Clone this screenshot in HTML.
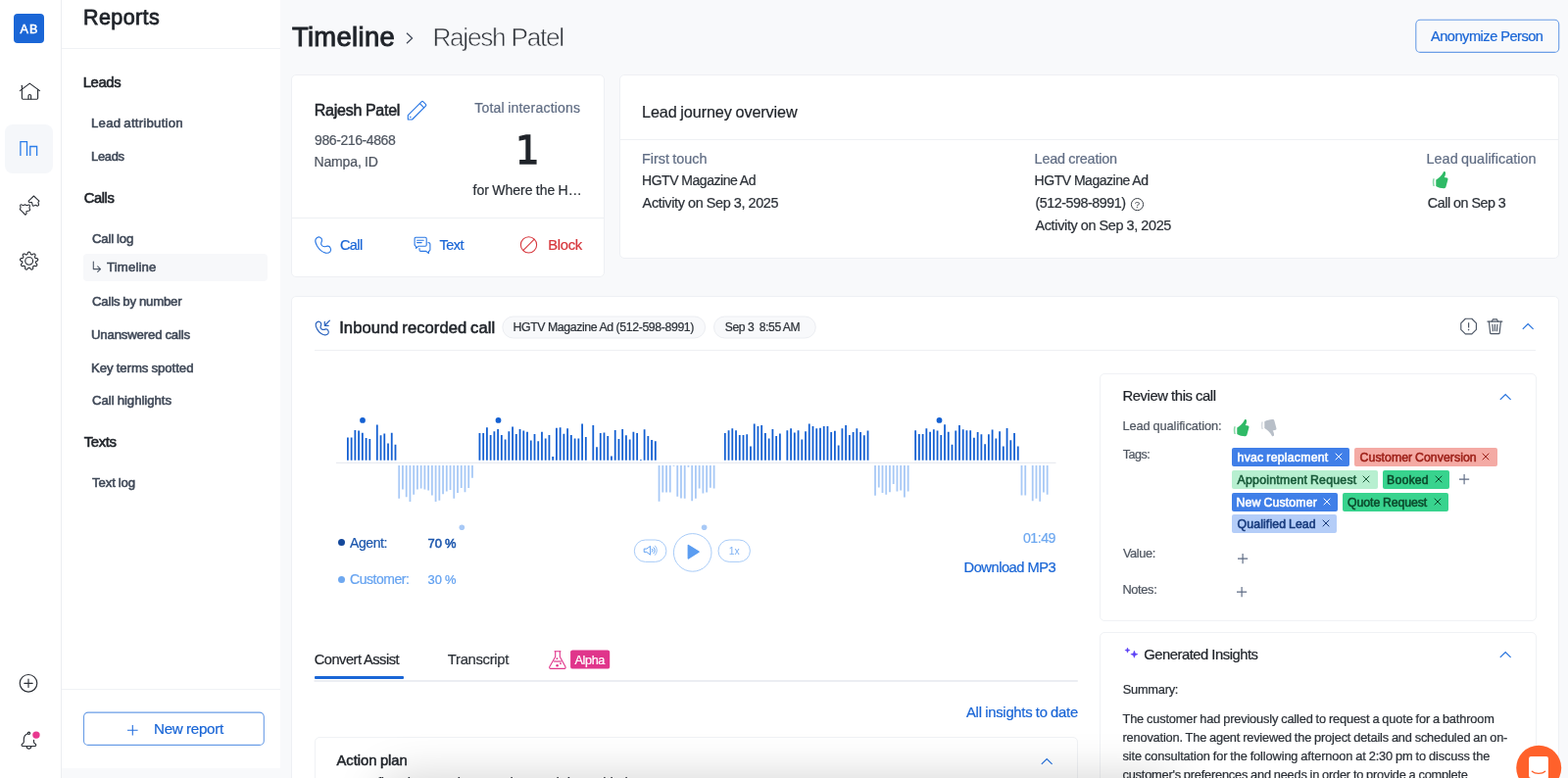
<!DOCTYPE html>
<html lang="en">
<head>
<meta charset="utf-8">
<title>Timeline - Rajesh Patel</title>
<style>
html,body{margin:0;padding:0}
body{width:1600px;height:794px;overflow:hidden;position:relative;background:#f8f9fb;font-family:"Liberation Sans",sans-serif;color:#1f2329}
div,span,a,h1,h2,h3,p,button,nav,aside,main,section,header,svg{position:absolute;box-sizing:border-box;margin:0;padding:0}
.g{left:0;top:0;width:0;height:0}
.t{line-height:1;white-space:pre;font-weight:400}
.card{background:#fff;border-radius:5px;border:1px solid #eef0f4}
.pill{border-radius:12px;background:#f7f8fa;border:1px solid #eef0f4}
.tag{border-radius:2px}
svg{overflow:visible}
</style>
</head>
<body>
<div id="app" style="left:0;top:0;width:1600px;height:794px;will-change:transform">
<div class="g rail" aria-label="Primary navigation">
<nav style="left:0;top:0;width:63px;height:794px;background:#fff;border-right:1px solid #eceef1">
</nav>
<div style="left:14px;top:14px;width:31px;height:30px;background:#1a66d6;border-radius:4px"></div>
<span class="t" style="left:20.55px;top:24px;font-size:12.6px;-webkit-text-stroke:0.5px currentColor;color:#fff;letter-spacing:1.1px;">AB</span>
<div style="left:5px;top:127px;width:49px;height:50px;background:#f5f7fa;border-radius:8px"></div>
<svg style="left:18px;top:82px" width="26" height="22" viewBox="18 82 26 22" fill="none"><g stroke="#2b2f36" stroke-width="1.15" stroke-linecap="round" stroke-linejoin="round"><path d="M20.4 92.6L30.3 85.1L40.5 92.6"/><path d="M22.4 87.2V91"/><path d="M22.4 91.4V100.1a1.1 1.1 0 0 0 1.1 1.1H37.5a1.1 1.1 0 0 0 1.1-1.1V91.4"/><path d="M29 101V97.8a1.3 1.3 0 0 1 2.6 0V101"/></g></svg>
<svg style="left:18px;top:141px" width="24" height="20" viewBox="18 141 24 20" fill="none"><g stroke="#2b7de9" stroke-width="1.3" stroke-linejoin="miter"><path d="M20.9 159V144.6H27.5V159"/><path d="M30.8 159V149.5H37.6V159"/></g></svg>
<svg style="left:18px;top:197px" width="26" height="24" viewBox="18 197 26 24" fill="none"><g stroke="#2b2f36" stroke-width="1.1" stroke-linejoin="round"><path d="M31.79 202.55L34.43 200L37.19 202.55L39.95 205.1L39.33 205.85Q38.7 206.6 38.95 207.1Q39.2 207.6 39.5 208.45Q39.8 209.3 39 209.85Q38.2 210.4 37.45 209.75Q36.7 209.1 36.2 209.25Q35.7 209.4 34.95 209.9Q34.2 210.4 33.65 210Q33.1 209.6 33 208.5Q32.9 207.4 32.55 206.75Q32.2 206.1 31.43 206.5Q30.65 206.9 30.02 206.5Q29.4 206.1 29.27 205.6L29.14 205.1L31.79 202.55Z"/><path d="M20.8 210.55Q20.3 209.4 21.05 208.9Q21.8 208.4 22.58 209.15Q23.35 209.9 24.48 209.25Q25.6 208.6 26.5 209.25Q27.4 209.9 28.65 209.25Q29.9 208.6 30.27 209.38Q30.65 210.15 30.15 211.18Q29.65 212.2 30.27 213.05Q30.9 213.9 30.52 214.55Q30.15 215.2 28.88 215.2Q27.6 215.2 27.1 215.7Q26.6 216.2 27 217.08Q27.4 217.96 26.63 218.61L25.87 219.25L23.09 216.47L20.3 213.7L20.8 212.7Q21.3 211.7 20.8 210.55Z"/></g></svg>
<svg style="left:18px;top:255px" width="24" height="24" viewBox="18 255 24 24" fill="none"><g stroke="#2b2f36" stroke-width="1.15" stroke-linejoin="round"><path d="M29.65 257.15L29.92 257.18L30.18 257.26L30.43 257.4L30.67 257.6L30.89 257.88L31.05 258.42L31.17 258.97L31.33 259.26L31.49 259.48L31.66 259.65L31.83 259.78L32.01 259.87L32.21 259.92L32.42 259.93L32.66 259.9L32.92 259.83L33.23 259.71L33.67 259.38L34.14 259.06L34.49 258.99L34.8 258.99L35.09 259.05L35.34 259.15L35.56 259.3L35.75 259.5L35.9 259.73L36 260L36.06 260.31L36.05 260.66L35.82 261.18L35.56 261.67L35.5 262L35.48 262.27L35.49 262.51L35.54 262.72L35.63 262.9L35.74 263.06L35.9 263.21L36.1 263.34L36.34 263.46L36.66 263.57L37.21 263.6L37.78 263.66L38.09 263.82L38.33 264.02L38.51 264.25L38.64 264.49L38.71 264.75L38.73 265.02L38.69 265.29L38.6 265.57L38.44 265.84L38.21 266.1L37.7 266.35L37.19 266.57L36.93 266.77L36.74 266.97L36.6 267.16L36.5 267.35L36.45 267.55L36.43 267.75L36.46 267.96L36.52 268.19L36.63 268.44L36.81 268.72L37.21 269.1L37.61 269.51L37.74 269.84L37.79 270.15L37.79 270.44L37.73 270.71L37.62 270.95L37.46 271.17L37.26 271.35L37.01 271.5L36.72 271.61L36.37 271.66L35.82 271.52L35.28 271.36L34.95 271.35L34.68 271.38L34.45 271.44L34.25 271.52L34.09 271.64L33.94 271.78L33.83 271.96L33.73 272.18L33.66 272.44L33.61 272.77L33.68 273.32L33.71 273.89L33.6 274.22L33.45 274.49L33.26 274.71L33.04 274.88L32.8 275L32.54 275.06L32.26 275.07L31.98 275.03L31.68 274.92L31.38 274.73L31.05 274.28L30.74 273.81L30.5 273.59L30.27 273.44L30.06 273.33L29.85 273.27L29.65 273.25L29.45 273.27L29.24 273.33L29.03 273.44L28.8 273.59L28.56 273.81L28.25 274.28L27.92 274.73L27.62 274.92L27.32 275.03L27.04 275.07L26.76 275.06L26.5 275L26.26 274.88L26.04 274.71L25.85 274.49L25.7 274.22L25.59 273.89L25.63 273.32L25.69 272.77L25.64 272.44L25.57 272.18L25.47 271.96L25.36 271.78L25.21 271.64L25.05 271.52L24.85 271.44L24.62 271.38L24.35 271.35L24.02 271.36L23.48 271.52L22.93 271.66L22.58 271.61L22.29 271.5L22.04 271.35L21.84 271.17L21.68 270.95L21.57 270.71L21.51 270.44L21.51 270.15L21.56 269.84L21.69 269.51L22.09 269.1L22.49 268.72L22.67 268.44L22.78 268.19L22.84 267.96L22.87 267.75L22.85 267.55L22.8 267.35L22.7 267.16L22.56 266.97L22.37 266.77L22.11 266.57L21.6 266.35L21.09 266.1L20.86 265.84L20.7 265.57L20.61 265.29L20.57 265.02L20.59 264.75L20.66 264.49L20.79 264.25L20.97 264.02L21.21 263.82L21.52 263.66L22.09 263.6L22.64 263.57L22.96 263.46L23.2 263.34L23.4 263.21L23.56 263.06L23.67 262.9L23.76 262.72L23.81 262.51L23.82 262.27L23.8 262L23.74 261.67L23.48 261.18L23.25 260.66L23.24 260.31L23.3 260L23.4 259.73L23.55 259.5L23.74 259.3L23.96 259.15L24.21 259.05L24.5 258.99L24.81 258.99L25.16 259.06L25.63 259.38L26.07 259.71L26.38 259.83L26.64 259.9L26.88 259.93L27.09 259.92L27.29 259.87L27.47 259.78L27.64 259.65L27.81 259.48L27.97 259.26L28.13 258.97L28.25 258.42L28.41 257.88L28.63 257.6L28.87 257.4L29.12 257.26L29.38 257.18L29.65 257.15Z"/><circle cx="29.65" cy="266.35" r="3.9"/></g></svg>
<svg style="left:18px;top:686px" width="22" height="22" viewBox="18 686 22 22" fill="none"><g stroke="#2b2f36" stroke-width="1.15" stroke-linecap="round"><circle cx="29" cy="697.3" r="8.8"/><path d="M24.8 697.3H33.2M29 693.1V701.5"/></g></svg>
<svg style="left:19px;top:744px" width="26" height="24" viewBox="19 744 26 24" fill="none"><g stroke="#2b2f36" stroke-width="1.15" stroke-linecap="round" stroke-linejoin="round"><path d="M28.3 748.7C25.5 749.6 24.3 752 24.3 754.6V757.2C24.3 758.2 23.6 758.7 22.7 759.3C21.8 759.9 21.9 761.5 23.2 761.5H35.6C36.9 761.5 37 759.9 36.1 759.3C35.2 758.7 34.5 758.2 34.5 757.2V755.2"/><circle cx="29.5" cy="748.3" r="1.15"/><path d="M27.2 761.8C27.4 764.9 31.6 764.9 31.8 761.8"/></g><circle cx="36.95" cy="750.1" r="4.6" fill="#fff"/><circle cx="36.95" cy="750.1" r="3.7" fill="#e8388f"/></svg>
</div>
<div class="g sidebar" aria-label="Reports navigation">
<aside style="left:63px;top:0;width:223px;height:784px;background:#fff"></aside>
<div style="left:63px;top:49px;width:223px;height:1px;background:#f0f2f5"></div>
<span class="t" style="left:85px;top:7.59375px;font-size:21.5px;-webkit-text-stroke:0.8px currentColor;color:#1f2329;letter-spacing:0.41px;">Reports</span>
<h3 class="t" style="left:84.7px;top:77px;font-size:14.8px;-webkit-text-stroke:0.6px currentColor;color:#1f2329;letter-spacing:-0.35px;">Leads</h3>
<h3 class="t" style="left:85.7px;top:194.703125px;font-size:14.7px;-webkit-text-stroke:0.6px currentColor;color:#1f2329;letter-spacing:-0.38px;">Calls</h3>
<h3 class="t" style="left:85.7px;top:443.703125px;font-size:14.9px;-webkit-text-stroke:0.6px currentColor;color:#1f2329;letter-spacing:-0.35px;">Texts</h3>
<div style="left:85px;top:259px;width:188px;height:28px;background:#f7f8fa;border-radius:4px"></div>
<a class="t" style="left:93px;top:119.296875px;font-size:13.2px;-webkit-text-stroke:0.55px currentColor;color:#3f4857;letter-spacing:0.24px;word-spacing:-0.85px;">Lead attribution</a>
<a class="t" style="left:93px;top:154px;font-size:12.9px;-webkit-text-stroke:0.55px currentColor;color:#3f4857;letter-spacing:-0.27px;">Leads</a>
<a class="t" style="left:94px;top:237px;font-size:13.2px;-webkit-text-stroke:0.55px currentColor;color:#3f4857;letter-spacing:-0.19px;word-spacing:-0.42px;">Call log</a>
<a class="t" style="left:94px;top:300.90625px;font-size:13.2px;-webkit-text-stroke:0.55px currentColor;color:#3f4857;letter-spacing:-0.21px;word-spacing:-0.4px;">Calls by number</a>
<a class="t" style="left:93px;top:334.59375px;font-size:13.2px;-webkit-text-stroke:0.55px currentColor;color:#3f4857;letter-spacing:-0.17px;word-spacing:-0.44px;">Unanswered calls</a>
<a class="t" style="left:93px;top:368.5px;font-size:13.2px;-webkit-text-stroke:0.55px currentColor;color:#3f4857;letter-spacing:-0.04px;word-spacing:-0.57px;">Key terms spotted</a>
<a class="t" style="left:94px;top:402.09375px;font-size:13.2px;-webkit-text-stroke:0.55px currentColor;color:#3f4857;letter-spacing:-0.03px;word-spacing:-0.58px;">Call highlights</a>
<a class="t" style="left:94px;top:485.5px;font-size:13.2px;-webkit-text-stroke:0.55px currentColor;color:#3f4857;letter-spacing:-0.12px;word-spacing:-0.49px;">Text log</a>
<svg style="left:93px;top:265px" width="12" height="14" viewBox="93 265 12 14" fill="none"><g stroke="#4d5766" stroke-width="1.1" stroke-linecap="round" stroke-linejoin="round"><path d="M95.3 267V274.6H102.2"/><path d="M99.7 271.9L102.5 274.6L99.7 277.3"/></g></svg>
<a class="t" style="left:109.1px;top:266.40625px;font-size:13.2px;-webkit-text-stroke:0.55px currentColor;color:#3f4857;letter-spacing:0.14px;">Timeline</a>
<div style="left:63px;top:703px;width:223px;height:1px;background:#f0f2f5"></div>
<svg style="left:84px;top:726px" width="187" height="37" viewBox="84 726 187 37" fill="none"><rect x="85.5" y="727.1" width="183.8" height="33.3" rx="4.5" fill="#fff" stroke="#6a9de6" stroke-width="1.1"/></svg>
<svg style="left:129.3px;top:738.8px" width="12.6" height="12.6" viewBox="129.3 738.8 12.6 12.6" fill="none"><path d="M130.3 745.1H140.9M135.6 739.8V750.4" stroke="#2670de" stroke-width="1.1"/></svg>
<span class="t" style="left:157px;top:736px;font-size:15.2px;-webkit-text-stroke:0.22px currentColor;color:#1a66d6;letter-spacing:-0.29px;word-spacing:-0.4px;">New report</span>
</div>
<header class="g page-header" aria-label="Page header">
<h1 class="t" style="left:297.9px;top:23.59375px;font-size:27.4px;-webkit-text-stroke:0.93px currentColor;color:#1f2329;letter-spacing:0.34px;">Timeline</h1>
<svg style="left:414px;top:33px" width="8" height="12" viewBox="0 0 8 12"><path d="M1 0.8 L6.6 6 L1 11.2" fill="none" stroke="#3f4857" stroke-width="1.2"/></svg>
<h2 class="t" style="left:441.4px;top:24.59375px;font-size:26.2px;color:#33373d;letter-spacing:-1.25px;word-spacing:0.04px;-webkit-text-stroke:0.6px #f8f9fb;">Rajesh Patel</h2>
<svg style="left:1443px;top:19px" width="149" height="37" viewBox="1443 19 149 37" fill="none"><rect x="1444.8" y="20.3" width="145.9" height="33.1" rx="4.5" fill="none" stroke="#6a9de6" stroke-width="1.1"/></svg>
<span class="t" style="left:1460px;top:29.90625px;font-size:14.6px;-webkit-text-stroke:0.22px currentColor;color:#1a66d6;letter-spacing:-0.49px;word-spacing:-0.18px;">Anonymize Person</span>
</header>
<section class="g person-card" aria-label="Contact">
<div class="card" style="left:297px;top:76px;width:320px;height:207px;"></div>
<div style="left:298px;top:222px;width:318px;height:1px;background:#eef0f3"></div>
<span class="t" style="left:320.8px;top:104.59375px;font-size:16px;-webkit-text-stroke:0.54px currentColor;color:#1f2329;letter-spacing:-0.24px;word-spacing:-0.49px;">Rajesh Patel</span>
<svg style="left:414px;top:101px" width="24" height="24" viewBox="414 101 24 24" fill="none"><g stroke="#2b78e4" stroke-width="1.15" stroke-linejoin="round" stroke-linecap="round"><path d="M416.3 117.6L430.1 103.8a1.3 1.3 0 0 1 1.8 0l2.5 2.5a1.3 1.3 0 0 1 0 1.8L420.6 122H416.3Z"/><path d="M428.4 105.6L432.6 109.8"/></g><circle cx="418.8" cy="119.4" r=".75" fill="#2b78e4"/></svg>
<span class="t" style="left:321px;top:135.5px;font-size:14px;-webkit-text-stroke:0.22px currentColor;color:#4f5661;letter-spacing:-0.4px;">986-216-4868</span>
<span class="t" style="left:320.4px;top:158.40625px;font-size:14px;-webkit-text-stroke:0.22px currentColor;color:#4f5661;letter-spacing:-0.11px;word-spacing:-0.54px;">Nampa, ID</span>
<span class="t" style="left:484.3px;top:103px;font-size:14px;-webkit-text-stroke:0.22px currentColor;color:#606d84;letter-spacing:0.21px;word-spacing:-0.85px;">Total interactions</span>
<span class="t" style="left:524.8px;top:135px;width:27px;text-align:center;font-size:38.5px;font-family:&quot;DejaVu Sans&quot;,&quot;Liberation Sans&quot;,sans-serif;color:#1f2329;-webkit-text-stroke:1.3px #1f2329">1</span>
<span class="t" style="left:482.5px;top:187px;font-size:14px;-webkit-text-stroke:0.22px currentColor;color:#2c3138;letter-spacing:0.03px;word-spacing:-0.67px;">for Where the H…</span>
<svg style="left:318px;top:239px" width="24" height="24" viewBox="318 239 24 24" fill="none"><g transform="translate(329.6 250) scale(.93) translate(-329.5 -249.9)"><path d="M323 241.9Q324.6 240.6 326.4 241.6Q328.8 243 328.3 245.4L327.5 247.6Q327 249.6 328.6 250.8Q330.6 252.2 332.6 251.6L334.4 251.1Q336.6 250.9 337.6 253.2Q338.8 255.6 337.4 257.2Q335.4 259.4 332.2 258.6Q326.6 257.2 323 251Q320.6 246.6 321.2 244.4Q321.6 243 323 241.9Z" stroke="#2b78e4" stroke-width="1.2" stroke-linejoin="round"/></g></svg>
<span class="t" style="left:346.9px;top:243px;font-size:14.5px;-webkit-text-stroke:0.22px currentColor;color:#1a66d6;letter-spacing:-0.59px;">Call</span>
<svg style="left:421px;top:240px" width="22" height="22" viewBox="421 240 22 22" fill="none"><g stroke="#2b78e4" stroke-width="1.1" stroke-linejoin="round" stroke-linecap="round"><path d="M424.2 242.3H434a1.2 1.2 0 0 1 1.2 1.2V250a1.2 1.2 0 0 1-1.2 1.2H427.2L424.6 253.4V251.2a1.4 1.4 0 0 1-1.5-1.3V243.5a1.2 1.2 0 0 1 1.1-1.2Z"/><path d="M425.6 245.2H432.2M425.6 247.6H430.2"/><path d="M437 247.6a1.7 1.7 0 0 1 1.9 1.6V254.8a1.5 1.5 0 0 1-1.5 1.5V258.6L434.8 256.4H429.4a1.4 1.4 0 0 1-1.4-1.4V253.6"/></g></svg>
<span class="t" style="left:448.5px;top:243px;font-size:14.5px;-webkit-text-stroke:0.22px currentColor;color:#1a66d6;letter-spacing:-0.55px;">Text</span>
<svg style="left:529px;top:239px" width="22" height="22" viewBox="529 239 22 22" fill="none"><g stroke="#d7393f" stroke-width="1.1"><circle cx="539.5" cy="249.9" r="8.1"/><path d="M533.8 255.6L545.2 244.2"/></g></svg>
<span class="t" style="left:559.3px;top:243px;font-size:14.8px;-webkit-text-stroke:0.22px currentColor;color:#d6363c;letter-spacing:-0.35px;">Block</span>
</section>
<section class="g journey-card" aria-label="Lead journey overview">
<div class="card" style="left:632px;top:76px;width:959px;height:188px;"></div>
<div style="left:633px;top:142px;width:957px;height:1px;background:#eef0f3"></div>
<span class="t" style="left:655px;top:106px;font-size:16.2px;-webkit-text-stroke:0.22px currentColor;color:#1f2329;letter-spacing:-0.1px;word-spacing:-0.65px;">Lead journey overview</span>
<span class="t" style="left:655px;top:155px;font-size:14.4px;-webkit-text-stroke:0.22px currentColor;color:#606d84;word-spacing:-0.66px;">First touch</span>
<span class="t" style="left:655px;top:177.40625px;font-size:14px;-webkit-text-stroke:0.22px currentColor;color:#2c3138;letter-spacing:-0.46px;word-spacing:-0.19px;">HGTV Magazine Ad</span>
<span class="t" style="left:655.6px;top:200px;font-size:14.4px;-webkit-text-stroke:0.22px currentColor;color:#2c3138;letter-spacing:-0.31px;word-spacing:-0.35px;">Activity on Sep 3, 2025</span>
<span class="t" style="left:1055.6px;top:155px;font-size:14.4px;-webkit-text-stroke:0.22px currentColor;color:#606d84;letter-spacing:-0.19px;word-spacing:-0.48px;">Lead creation</span>
<span class="t" style="left:1055.6px;top:177.40625px;font-size:14px;-webkit-text-stroke:0.22px currentColor;color:#2c3138;letter-spacing:-0.46px;word-spacing:-0.19px;">HGTV Magazine Ad</span>
<span class="t" style="left:1056.4px;top:200px;font-size:14.3px;-webkit-text-stroke:0.22px currentColor;color:#2c3138;letter-spacing:-0.45px;">(512-598-8991)</span>
<svg style="left:1152px;top:200px" width="18" height="18" viewBox="1152 200 18 18" fill="none"><circle cx="1160.5" cy="208.6" r="6.1" stroke="#3a3f47" stroke-width="1"/><text x="1160.5" y="212.1" text-anchor="middle" font-family="Liberation Sans, sans-serif" font-size="9.6" fill="#3a3f47">?</text></svg>
<span class="t" style="left:1056.4px;top:223px;font-size:14.4px;-webkit-text-stroke:0.22px currentColor;color:#2c3138;letter-spacing:-0.31px;word-spacing:-0.35px;">Activity on Sep 3, 2025</span>
<span class="t" style="left:1455.5px;top:155px;font-size:14.4px;-webkit-text-stroke:0.22px currentColor;color:#606d84;letter-spacing:0.04px;word-spacing:-0.7px;">Lead qualification</span>
<svg style="left:1460.3px;top:172.5px" width="20" height="22" viewBox="1460.3 172.5 20 22" fill="none"><g transform="translate(203.3 -253.5)"><path fill="#2fba66" d="M1262.3 442.9V436.4C1264.6 435.3 1268.2 432.4 1270 428.4C1270.4 427.7 1271.9 428 1272 429.2C1272.2 431 1271.6 432.6 1270.7 433.9L1273.6 434.6C1274.5 434.9 1274.6 435.6 1274.4 436.4L1272.4 443.8C1272.1 444.8 1271.3 445.3 1270.3 445.2C1267.6 445 1264.6 444.4 1262.3 442.9Z"/><path fill="#2fba66" opacity=".55" d="M1259.2 435.3H1260.8C1260.3 437.8 1260.3 440.4 1260.9 442.9H1259.4C1258.7 440.4 1258.6 437.8 1259.2 435.3Z"/></g></svg>
<span class="t" style="left:1456.8px;top:200px;font-size:14.3px;-webkit-text-stroke:0.22px currentColor;color:#2c3138;letter-spacing:-0.43px;word-spacing:-0.22px;">Call on Sep 3</span>
</section>
<section class="g call-card" aria-label="Inbound recorded call">
<div class="card" style="left:297px;top:302px;width:1294px;height:500px;border-radius:5px 5px 0 0"></div>
<svg style="left:319px;top:324px" width="22" height="20" viewBox="319 324 22 20" fill="none"><g transform="translate(73.3 141.33) scale(0.775)"><path d="M323 241.9Q324.6 240.6 326.4 241.6Q328.8 243 328.3 245.4L327.5 247.6Q327 249.6 328.6 250.8Q330.6 252.2 332.6 251.6L334.4 251.1Q336.6 250.9 337.6 253.2Q338.8 255.6 337.4 257.2Q335.4 259.4 332.2 258.6Q326.6 257.2 323 251Q320.6 246.6 321.2 244.4Q321.6 243 323 241.9Z" stroke="#2a62bd" stroke-width="1.55" stroke-linejoin="round"/></g><g stroke="#2a62bd" stroke-width="1.2" stroke-linecap="round" stroke-linejoin="round"><path d="M336.4 327.2L331.6 332"/><path d="M331.3 328.4V332.3H335.2"/></g></svg>
<span class="t" style="left:346.2px;top:326.90625px;font-size:16.6px;-webkit-text-stroke:0.56px currentColor;color:#1f2329;letter-spacing:0.05px;word-spacing:-0.81px;">Inbound recorded call</span>
<svg style="left:511px;top:321px" width="211" height="26" viewBox="511 321 211 26" fill="none"><rect x="512.8" y="323" width="206.8" height="22" rx="11" fill="#f8f9fb" stroke="#eceef2" stroke-width="1"/></svg>
<span class="t" style="left:523.5px;top:328.40625px;font-size:12.3px;-webkit-text-stroke:0.22px currentColor;color:#2c3138;letter-spacing:-0.38px;word-spacing:-0.18px;">HGTV Magazine Ad (512-598-8991)</span>
<svg style="left:727px;top:321px" width="108" height="26" viewBox="727 321 108 26" fill="none"><rect x="728.5" y="323" width="103.8" height="22" rx="11" fill="#f8f9fb" stroke="#eceef2" stroke-width="1"/></svg>
<span class="t" style="left:739.8px;top:328.40625px;font-size:12.1px;-webkit-text-stroke:0.22px currentColor;color:#2c3138;letter-spacing:-0.41px;word-spacing:-0.15px;">Sep 3  8:55 AM</span>
<svg style="left:1488px;top:322px" width="22" height="22" viewBox="1488 322 22 22" fill="none"><path d="M1506.42 336.34L1501.84 340.92L1495.36 340.92L1490.78 336.34L1490.78 329.86L1495.36 325.28L1501.84 325.28L1506.42 329.86Z" stroke="#4d5766" stroke-width="1.15" stroke-linejoin="round"/><path d="M1498.6 329.2V334.4" stroke="#4d5766" stroke-width="1.2"/><circle cx="1498.6" cy="336.6" r=".8" fill="#4d5766"/></svg>
<svg style="left:1516px;top:323px" width="20" height="20" viewBox="1516 323 20 20" fill="none"><g stroke="#4d5766" stroke-width="1.15" stroke-linecap="round" stroke-linejoin="round"><path d="M1517.9 328.1H1532.9"/><path d="M1522.3 327.9L1523.3 325.9H1527.5L1528.5 327.9"/><path d="M1519.4 328.3L1520.6 339.6a1.1 1.1 0 0 0 1.1 1H1529.1a1.1 1.1 0 0 0 1.1-1L1531.4 328.3"/><path d="M1522.9 331.2L1523.4 337.6M1525.4 331.2V337.6M1527.9 331.2L1527.4 337.6"/></g></svg>
<svg style="left:1551.7px;top:327.8px" width="14" height="10" viewBox="1551.7 327.8 14 10" fill="none"><path d="M1553.5 335.6L1558.9 330.4L1564.3 335.6" stroke="#2370dd" stroke-width="1.15"/></svg>
<div style="left:321px;top:357px;width:1246px;height:1px;background:#eef0f3"></div>
<svg style="left:340px;top:420px" width="742" height="125" viewBox="340 420 742 125" role="img"><rect x="343" y="471.8" width="734.5" height="1" fill="#e4e7ed"/><path fill="#1460d2" d="M354 446.5h1.8V469.8h-1.8zM357.74 446.5h1.8V469.8h-1.8zM361.47 438.9h1.8V469.8h-1.8zM365.21 439.6h1.8V469.8h-1.8zM368.95 441.8h1.8V469.8h-1.8zM372.69 447.1h1.8V469.8h-1.8zM376.42 448.1h1.8V469.8h-1.8zM383.9 433.6h1.8V469.8h-1.8zM387.63 444.2h1.8V469.8h-1.8zM391.37 442.5h1.8V469.8h-1.8zM395.11 452.5h1.8V469.8h-1.8zM398.84 441.8h1.8V469.8h-1.8zM402.58 453.8h1.8V469.8h-1.8zM488.53 442.1h1.8V469.8h-1.8zM492.27 442.1h1.8V469.8h-1.8zM496.01 436.2h1.8V469.8h-1.8zM499.74 444h1.8V469.8h-1.8zM503.48 440.2h1.8V469.8h-1.8zM507.22 437.9h1.8V469.8h-1.8zM510.95 444h1.8V469.8h-1.8zM514.69 448.4h1.8V469.8h-1.8zM518.43 440.2h1.8V469.8h-1.8zM522.16 435.4h1.8V469.8h-1.8zM525.9 443.1h1.8V469.8h-1.8zM529.64 437.9h1.8V469.8h-1.8zM533.38 439.6h1.8V469.8h-1.8zM537.11 440.8h1.8V469.8h-1.8zM540.85 449.6h1.8V469.8h-1.8zM544.59 443.1h1.8V469.8h-1.8zM548.32 450.3h1.8V469.8h-1.8zM552.06 440.8h1.8V469.8h-1.8zM555.8 447.4h1.8V469.8h-1.8zM559.53 444h1.8V469.8h-1.8zM563.27 466h1.8V469.8h-1.8zM567.01 436.8h1.8V469.8h-1.8zM570.75 436.2h1.8V469.8h-1.8zM574.48 442.7h1.8V469.8h-1.8zM578.22 437.3h1.8V469.8h-1.8zM581.96 444h1.8V469.8h-1.8zM585.69 447.4h1.8V469.8h-1.8zM589.43 447.4h1.8V469.8h-1.8zM593.17 432.4h1.8V469.8h-1.8zM596.9 446.1h1.8V469.8h-1.8zM604.38 433.9h1.8V469.8h-1.8zM608.12 456.2h1.8V469.8h-1.8zM611.85 442.1h1.8V469.8h-1.8zM615.59 441.4h1.8V469.8h-1.8zM619.33 445h1.8V469.8h-1.8zM623.06 465.6h1.8V469.8h-1.8zM626.8 438.9h1.8V469.8h-1.8zM630.54 448h1.8V469.8h-1.8zM634.27 437.9h1.8V469.8h-1.8zM638.01 444.2h1.8V469.8h-1.8zM641.75 448.4h1.8V469.8h-1.8zM645.49 440.8h1.8V469.8h-1.8zM649.22 442.1h1.8V469.8h-1.8zM652.96 468.9h1.8V469.8h-1.8zM656.7 438.3h1.8V469.8h-1.8zM660.43 445h1.8V469.8h-1.8zM664.17 449h1.8V469.8h-1.8zM667.91 450.3h1.8V469.8h-1.8zM738.91 442.1h1.8V469.8h-1.8zM742.65 439.2h1.8V469.8h-1.8zM746.38 437.3h1.8V469.8h-1.8zM750.12 439.2h1.8V469.8h-1.8zM753.86 444h1.8V469.8h-1.8zM757.6 444h1.8V469.8h-1.8zM761.33 443.3h1.8V469.8h-1.8zM765.07 455.6h1.8V469.8h-1.8zM768.81 432.6h1.8V469.8h-1.8zM772.54 434.9h1.8V469.8h-1.8zM776.28 433.9h1.8V469.8h-1.8zM780.02 442.1h1.8V469.8h-1.8zM783.75 447.4h1.8V469.8h-1.8zM787.49 437.9h1.8V469.8h-1.8zM791.23 445h1.8V469.8h-1.8zM794.97 442.5h1.8V469.8h-1.8zM802.44 439.2h1.8V469.8h-1.8zM806.18 437.3h1.8V469.8h-1.8zM809.91 441.4h1.8V469.8h-1.8zM813.65 439.2h1.8V469.8h-1.8zM817.39 448.6h1.8V469.8h-1.8zM821.12 440.2h1.8V469.8h-1.8zM824.86 432.6h1.8V469.8h-1.8zM828.6 434.9h1.8V469.8h-1.8zM832.34 437.3h1.8V469.8h-1.8zM836.07 436.8h1.8V469.8h-1.8zM839.81 434.9h1.8V469.8h-1.8zM843.55 434.9h1.8V469.8h-1.8zM847.28 441.1h1.8V469.8h-1.8zM851.02 439.8h1.8V469.8h-1.8zM854.76 454.4h1.8V469.8h-1.8zM858.5 437.3h1.8V469.8h-1.8zM862.23 433.9h1.8V469.8h-1.8zM865.97 444h1.8V469.8h-1.8zM869.71 441.1h1.8V469.8h-1.8zM873.44 437.3h1.8V469.8h-1.8zM877.18 441.1h1.8V469.8h-1.8zM880.92 444.2h1.8V469.8h-1.8zM884.65 439.6h1.8V469.8h-1.8zM933.24 439.2h1.8V469.8h-1.8zM936.97 443.1h1.8V469.8h-1.8zM940.71 443.1h1.8V469.8h-1.8zM944.45 437.3h1.8V469.8h-1.8zM948.18 440.8h1.8V469.8h-1.8zM951.92 438.3h1.8V469.8h-1.8zM955.66 439.6h1.8V469.8h-1.8zM959.39 444h1.8V469.8h-1.8zM963.13 433.3h1.8V469.8h-1.8zM966.87 440.8h1.8V469.8h-1.8zM970.61 453.8h1.8V469.8h-1.8zM974.34 439.6h1.8V469.8h-1.8zM978.08 434.1h1.8V469.8h-1.8zM981.82 438.3h1.8V469.8h-1.8zM985.55 439.2h1.8V469.8h-1.8zM989.29 439.2h1.8V469.8h-1.8zM993.03 446.7h1.8V469.8h-1.8zM996.76 441.1h1.8V469.8h-1.8zM1000.5 443.3h1.8V469.8h-1.8zM1004.24 453.2h1.8V469.8h-1.8zM1007.98 443.3h1.8V469.8h-1.8zM1011.71 438.6h1.8V469.8h-1.8zM1015.45 447.4h1.8V469.8h-1.8zM1019.19 440.2h1.8V469.8h-1.8zM1022.92 455.6h1.8V469.8h-1.8zM1026.66 437h1.8V469.8h-1.8zM1030.4 449.3h1.8V469.8h-1.8zM1034.13 442.1h1.8V469.8h-1.8zM1037.87 455.6h1.8V469.8h-1.8z"/><path fill="#a8c9f6" d="M406.32 475h1.8V508.8h-1.8zM410.06 475h1.8V499.4h-1.8zM413.79 475h1.8V507.2h-1.8zM417.53 475h1.8V512h-1.8zM421.27 475h1.8V504.7h-1.8zM425 475h1.8V499.6h-1.8zM428.74 475h1.8V498.4h-1.8zM432.48 475h1.8V499.6h-1.8zM436.21 475h1.8V500.6h-1.8zM439.95 475h1.8V505.4h-1.8zM443.69 475h1.8V512h-1.8zM447.43 475h1.8V510.7h-1.8zM451.16 475h1.8V504.2h-1.8zM454.9 475h1.8V501.6h-1.8zM458.64 475h1.8V500h-1.8zM462.37 475h1.8V508.8h-1.8zM466.11 475h1.8V502.9h-1.8zM469.85 475h1.8V498.1h-1.8zM473.58 475h1.8V502.3h-1.8zM477.32 475h1.8V498.1h-1.8zM481.06 475h1.8V487.7h-1.8zM671.64 475h1.8V511.7h-1.8zM675.38 475h1.8V502.5h-1.8zM679.12 475h1.8V502.5h-1.8zM682.86 475h1.8V502.5h-1.8zM686.59 475h1.8V475.8h-1.8zM690.33 475h1.8V506.7h-1.8zM694.07 475h1.8V508.6h-1.8zM697.8 475h1.8V508.8h-1.8zM701.54 475h1.8V476.8h-1.8zM705.28 475h1.8V511.3h-1.8zM709.01 475h1.8V508.8h-1.8zM712.75 475h1.8V498.4h-1.8zM716.49 475h1.8V503.5h-1.8zM720.23 475h1.8V502.5h-1.8zM723.96 475h1.8V497.7h-1.8zM727.7 475h1.8V498.4h-1.8zM892.13 475h1.8V505.7h-1.8zM895.87 475h1.8V497.5h-1.8zM899.6 475h1.8V502.9h-1.8zM903.34 475h1.8V504.7h-1.8zM907.08 475h1.8V502.3h-1.8zM910.81 475h1.8V494.1h-1.8zM914.55 475h1.8V501.6h-1.8zM918.29 475h1.8V500.6h-1.8zM922.02 475h1.8V507.6h-1.8zM925.76 475h1.8V501.6h-1.8zM1041.61 475h1.8V505.4h-1.8zM1045.34 475h1.8V505.4h-1.8zM1052.82 475h1.8V511.3h-1.8zM1056.56 475h1.8V508.8h-1.8zM1060.29 475h1.8V511.7h-1.8zM1064.03 475h1.8V502.5h-1.8zM1067.77 475h1.8V504.7h-1.8z"/><circle cx="370" cy="428.9" r="2.9" fill="#1460d2"/><circle cx="508.5" cy="428.9" r="2.9" fill="#1460d2"/><circle cx="958.5" cy="428.9" r="2.9" fill="#1460d2"/><circle cx="471.3" cy="538.2" r="2.8" fill="#a8c9f6"/><circle cx="718.6" cy="538.2" r="2.8" fill="#a8c9f6"/></svg>
<div style="left:344.5px;top:549.5px;width:7px;height:7px;background:#14489b;border-radius:50%"></div>
<span class="t" style="left:357px;top:546.5px;font-size:14px;-webkit-text-stroke:0.22px currentColor;color:#1d57ad;letter-spacing:-0.42px;">Agent:</span>
<span class="t" style="left:436.5px;top:548.5px;font-size:12.9px;-webkit-text-stroke:0.55px currentColor;color:#1d57ad;letter-spacing:0.09px;word-spacing:-0.68px;">70 %</span>
<div style="left:344.5px;top:587.5px;width:7px;height:7px;background:#6ea8f0;border-radius:50%"></div>
<span class="t" style="left:357px;top:583.796875px;font-size:14px;-webkit-text-stroke:0.22px currentColor;color:#66a3f0;letter-spacing:-0.46px;">Customer:</span>
<span class="t" style="left:436.5px;top:585.796875px;font-size:12.9px;-webkit-text-stroke:0.22px currentColor;color:#5f9ff0;letter-spacing:0.09px;word-spacing:-0.68px;">30 %</span>
<svg style="left:645px;top:542px" width="124" height="44" viewBox="645 542 124 44" fill="none"><g stroke="#a9ccf8" stroke-width="1"><rect x="647.3" y="551" width="32.6" height="22.4" rx="11.2"/><circle cx="706.7" cy="563.9" r="19.3"/><rect x="733" y="551" width="32.4" height="22.4" rx="11.2"/></g><path d="M702.4 556.6L713 563.1L702.4 569.8Z" fill="#5b9df1" stroke="#5b9df1" stroke-width="1.6" stroke-linejoin="round"/><g stroke="#5b9df1" stroke-width=".95" stroke-linejoin="round" stroke-linecap="round"><path d="M657.6 560.1H659.8L663.6 557.4V566.2L659.8 563.4H657.6Z"/><path d="M665.5 560.3a2.1 2.1 0 0 1 0 2.9"/><path d="M667 558.7a4.3 4.3 0 0 1 0 6.1"/><path d="M668.5 557.1a6.6 6.6 0 0 1 0 9.3" opacity=".7"/></g><text x="749.3" y="565.8" text-anchor="middle" font-family="Liberation Sans, sans-serif" font-size="10.4" fill="#7fb2f4">1x</text></svg>
<span class="t" style="left:1044px;top:542.40625px;font-size:14.2px;-webkit-text-stroke:0.22px currentColor;color:#6ea8f0;letter-spacing:-0.53px;">01:49</span>
<span class="t" style="left:983.5px;top:572px;font-size:14.7px;-webkit-text-stroke:0.22px currentColor;color:#1a66d6;letter-spacing:-0.48px;word-spacing:-0.2px;">Download MP3</span>
<span class="t" style="left:320.8px;top:666px;font-size:14.6px;-webkit-text-stroke:0.22px currentColor;color:#1f2329;letter-spacing:-0.49px;word-spacing:-0.18px;">Convert Assist</span>
<div style="left:320.5px;top:690px;width:91px;height:3px;background:#1a66d6;border-radius:1px"></div>
<svg style="left:319px;top:693px" width="783" height="5" viewBox="319 693 783 5" fill="none"><rect x="320.5" y="694.1" width="779.3" height="1.75" rx="0" fill="#e9ecf1"/></svg>
<span class="t" style="left:456.8px;top:666px;font-size:14.8px;-webkit-text-stroke:0.22px currentColor;color:#2c3138;letter-spacing:-0.29px;">Transcript</span>
<svg style="left:559px;top:662px" width="22" height="24" viewBox="559 662 22 24" fill="none"><g stroke="#e0358b" stroke-width="1.1" stroke-linejoin="round" stroke-linecap="round"><path d="M566 664.7H572"/><path d="M566.7 664.9V670.2L560.8 680.6a1.2 1.2 0 0 0 1 1.8H576a1.2 1.2 0 0 0 1-1.8L571.3 670.2V664.9"/><path d="M565.4 675H572.4" stroke-width="1.3" opacity=".8"/></g><circle cx="568.4" cy="672.2" r=".9" fill="#e0358b"/><circle cx="568.6" cy="679.2" r="1.3" fill="#e0358b"/><circle cx="572" cy="677.2" r=".9" fill="#e0358b"/></svg>
<svg style="left:581px;top:662px" width="44" height="23" viewBox="581 662 44 23" fill="none"><rect x="582.1" y="663.4" width="40.1" height="19.2" rx="2.2" fill="#e0358b"/></svg>
<span class="t" style="left:586.6px;top:668px;font-size:12.6px;-webkit-text-stroke:0.22px currentColor;color:#fff;letter-spacing:-0.38px;">Alpha</span>
<span class="t" style="left:985.99px;top:720px;font-size:14.8px;-webkit-text-stroke:0.22px currentColor;color:#1a66d6;letter-spacing:-0.24px;word-spacing:-0.44px;">All insights to date</span>
<div style="left:321px;top:752px;width:779px;height:60px;border:1px solid #f0f2f5;border-radius:5px;background:#fff"></div>
<span class="t" style="left:343.5px;top:768.5px;font-size:14.8px;-webkit-text-stroke:0.5px currentColor;color:#1f2329;letter-spacing:-0.03px;word-spacing:-0.65px;">Action plan</span>
<svg style="left:1060.8px;top:771.6px" width="14" height="10" viewBox="1060.8 771.6 14 10" fill="none"><path d="M1062.6 779.4L1068 774.2L1073.4 779.4" stroke="#2370dd" stroke-width="1.15"/></svg>
<span class="t" style="left:343.6px;top:792px;font-size:14.4px;-webkit-text-stroke:0.22px currentColor;color:#2c3138;letter-spacing:-0.08px;word-spacing:-0.58px;">1. Confirm the appointment time and date with the customer</span>
</section>
<section class="g review-panel" aria-label="Review this call">
<div style="left:1122px;top:381px;width:445.5px;height:252.5px;border:1px solid #f0f2f5;border-radius:5px;background:#fff"></div>
<span class="t" style="left:1145.4px;top:396.796875px;font-size:14.8px;-webkit-text-stroke:0.22px currentColor;color:#1f2329;letter-spacing:-0.38px;word-spacing:-0.3px;">Review this call</span>
<svg style="left:1528.5px;top:399.5px" width="14" height="10" viewBox="1528.5 399.5 14 10" fill="none"><path d="M1530.3 407.3L1535.7 402.1L1541.1 407.3" stroke="#2370dd" stroke-width="1.15"/></svg>
<span class="t" style="left:1145.4px;top:429.296875px;font-size:12.8px;-webkit-text-stroke:0.22px currentColor;color:#4f5661;letter-spacing:-0.08px;word-spacing:-0.51px;">Lead qualification:</span>
<svg style="left:1257px;top:426px" width="20" height="22" viewBox="1257 426 20 22" fill="none"><g transform="translate(0 0)"><path fill="#2fba66" d="M1262.3 442.9V436.4C1264.6 435.3 1268.2 432.4 1270 428.4C1270.4 427.7 1271.9 428 1272 429.2C1272.2 431 1271.6 432.6 1270.7 433.9L1273.6 434.6C1274.5 434.9 1274.6 435.6 1274.4 436.4L1272.4 443.8C1272.1 444.8 1271.3 445.3 1270.3 445.2C1267.6 445 1264.6 444.4 1262.3 442.9Z"/><path fill="#2fba66" opacity=".55" d="M1259.2 435.3H1260.8C1260.3 437.8 1260.3 440.4 1260.9 442.9H1259.4C1258.7 440.4 1258.6 437.8 1259.2 435.3Z"/></g></svg>
<svg style="left:1285px;top:426px" width="20" height="22" viewBox="1285 426 20 22" fill="none"><g transform="translate(0 0)"><path fill="#b8bfc8" d="M1290.3 430.3V436.9C1292.6 438 1296.2 440.9 1298 444.9C1298.4 445.6 1299.9 445.3 1300 444.1C1300.2 442.3 1299.6 440.7 1298.7 439.4L1301.6 438.7C1302.5 438.4 1302.6 437.7 1302.4 436.9L1300.4 429.5C1300.1 428.5 1299.3 428 1298.3 428.1C1295.6 428.3 1292.6 428.9 1290.3 430.3Z"/><path fill="#b8bfc8" opacity=".55" d="M1287.2 430.4H1288.8C1288.3 432.9 1288.3 435.5 1288.9 438H1287.4C1286.7 435.5 1286.6 432.9 1287.2 430.4Z"/></g></svg>
<span class="t" style="left:1145.8px;top:458.296875px;font-size:12.5px;-webkit-text-stroke:0.22px currentColor;color:#4f5661;letter-spacing:-0.48px;">Tags:</span>
<div class="tag" style="left:1257px;top:457px;width:120px;height:18.5px;background:#407fe8"></div>
<span class="t" style="left:1262.6px;top:461px;font-size:12.3px;-webkit-text-stroke:0.55px currentColor;color:#fff;letter-spacing:0.23px;word-spacing:-0.79px;">hvac replacment</span>
<svg style="left:1361.5px;top:462.0px" width="8" height="8" viewBox="0 0 8 8"><path d="M0.7 0.7L7.3 7.3M7.3 0.7L0.7 7.3" stroke="#fff" stroke-width="1" fill="none"/></svg>
<div class="tag" style="left:1382px;top:457px;width:145.5px;height:18.5px;background:#f4aaa4"></div>
<span class="t" style="left:1387.6px;top:461px;font-size:12.3px;-webkit-text-stroke:0.55px currentColor;color:#9d1f17;letter-spacing:0.04px;word-spacing:-0.61px;">Customer Conversion</span>
<svg style="left:1512.0px;top:462px" width="8" height="8" viewBox="0 0 8 8"><path d="M0.7 0.7L7.3 7.3M7.3 0.7L0.7 7.3" stroke="#9d1f17" stroke-width="1" fill="none"/></svg>
<div class="tag" style="left:1257px;top:480px;width:148.5px;height:18.5px;background:#b7efd0"></div>
<span class="t" style="left:1262.6px;top:484px;font-size:12.3px;-webkit-text-stroke:0.55px currentColor;color:#185a39;letter-spacing:0.23px;word-spacing:-0.8px;">Appointment Request</span>
<svg style="left:1390.0px;top:485.0px" width="8" height="8" viewBox="0 0 8 8"><path d="M0.7 0.7L7.3 7.3M7.3 0.7L0.7 7.3" stroke="#185a39" stroke-width="1" fill="none"/></svg>
<div class="tag" style="left:1410.5px;top:480px;width:68.5px;height:18.5px;background:#38d38e"></div>
<span class="t" style="left:1415.1px;top:484px;font-size:12.3px;-webkit-text-stroke:0.55px currentColor;color:#0c4a2c;letter-spacing:0.17px;">Booked</span>
<svg style="left:1463.5px;top:485px" width="8" height="8" viewBox="0 0 8 8"><path d="M0.7 0.7L7.3 7.3M7.3 0.7L0.7 7.3" stroke="#0c4a2c" stroke-width="1" fill="none"/></svg>
<svg style="left:1488px;top:483.3px" width="12.2" height="12.2" viewBox="1488 483.3 12.2 12.2" fill="none"><path d="M1489 489.4H1499.2M1494.1 484.3V494.5" stroke="#5d6b84" stroke-width="1.15"/></svg>
<div class="tag" style="left:1257px;top:503px;width:108px;height:18.5px;background:#407fe8"></div>
<span class="t" style="left:1261.6px;top:507px;font-size:12.3px;-webkit-text-stroke:0.55px currentColor;color:#fff;letter-spacing:0.15px;word-spacing:-0.72px;">New Customer</span>
<svg style="left:1349.5px;top:508.0px" width="8" height="8" viewBox="0 0 8 8"><path d="M0.7 0.7L7.3 7.3M7.3 0.7L0.7 7.3" stroke="#fff" stroke-width="1" fill="none"/></svg>
<div class="tag" style="left:1369.5px;top:503px;width:108.5px;height:18.5px;background:#38d38e"></div>
<span class="t" style="left:1375.1px;top:507px;font-size:12.3px;-webkit-text-stroke:0.55px currentColor;color:#0c4a2c;letter-spacing:-0.09px;word-spacing:-0.47px;">Quote Request</span>
<svg style="left:1462.5px;top:508px" width="8" height="8" viewBox="0 0 8 8"><path d="M0.7 0.7L7.3 7.3M7.3 0.7L0.7 7.3" stroke="#0c4a2c" stroke-width="1" fill="none"/></svg>
<div class="tag" style="left:1257px;top:525.3px;width:107px;height:18.5px;background:#b4cdf8"></div>
<span class="t" style="left:1262.6px;top:529.296875px;font-size:12.3px;-webkit-text-stroke:0.55px currentColor;color:#173a7c;letter-spacing:0.11px;word-spacing:-0.67px;">Qualified Lead</span>
<svg style="left:1348.5px;top:530.3px" width="8" height="8" viewBox="0 0 8 8"><path d="M0.7 0.7L7.3 7.3M7.3 0.7L0.7 7.3" stroke="#173a7c" stroke-width="1" fill="none"/></svg>
<span class="t" style="left:1145.9px;top:558.5px;font-size:12.8px;-webkit-text-stroke:0.22px currentColor;color:#4f5661;letter-spacing:-0.4px;">Value:</span>
<svg style="left:1262px;top:563.8px" width="12.2" height="12.2" viewBox="1262 563.8 12.2 12.2" fill="none"><path d="M1263 569.9H1273.2M1268.1 564.8V575" stroke="#5d6b84" stroke-width="1.15"/></svg>
<span class="t" style="left:1145.4px;top:595.5px;font-size:12.8px;-webkit-text-stroke:0.22px currentColor;color:#4f5661;letter-spacing:-0.33px;">Notes:</span>
<svg style="left:1260.9px;top:597.9px" width="12.2" height="12.2" viewBox="1260.9 597.9 12.2 12.2" fill="none"><path d="M1261.9 604H1272.1M1267 598.9V609.1" stroke="#5d6b84" stroke-width="1.15"/></svg>
</section>
<section class="g insights-panel" aria-label="Generated Insights">
<div style="left:1122px;top:645px;width:445.5px;height:170px;border:1px solid #f0f2f5;border-radius:5px;background:#fff"></div>
<svg style="left:1146px;top:659px" width="18" height="16" viewBox="1146 659 18 16" fill="none"><path fill="#5a3ff5" stroke="#5a3ff5" stroke-width=".5" stroke-linejoin="round" d="M1150.5 661L1151.2 662.9L1153.1 663.6L1151.2 664.3L1150.5 666.2L1149.8 664.3L1147.9 663.6L1149.8 662.9ZM1157.4 664.1L1158.37 666.73L1161 667.7L1158.37 668.67L1157.4 671.3L1156.43 668.67L1153.8 667.7L1156.43 666.73Z"/></svg>
<span class="t" style="left:1167.2px;top:661px;font-size:14.8px;-webkit-text-stroke:0.22px currentColor;color:#1f2329;letter-spacing:-0.47px;word-spacing:-0.22px;">Generated Insights</span>
<svg style="left:1528.5px;top:663.3px" width="14" height="10" viewBox="1528.5 663.3 14 10" fill="none"><path d="M1530.3 671.1L1535.7 665.9L1541.1 671.1" stroke="#2370dd" stroke-width="1.15"/></svg>
<span class="t" style="left:1145.8px;top:698px;font-size:12.8px;-webkit-text-stroke:0.22px currentColor;color:#2c3138;letter-spacing:-0.25px;">Summary:</span>
<p class="t" style="left:1145.5px;top:728px;font-size:12.8px;-webkit-text-stroke:0.22px currentColor;color:#2c3138;letter-spacing:-0.16px;word-spacing:-0.43px;">The customer had previously called to request a quote for a bathroom</p>
<p class="t" style="left:1145.5px;top:747px;font-size:12.8px;-webkit-text-stroke:0.22px currentColor;color:#2c3138;letter-spacing:-0.18px;word-spacing:-0.41px;">renovation. The agent reviewed the project details and scheduled an on-</p>
<p class="t" style="left:1145.5px;top:766px;font-size:12.8px;-webkit-text-stroke:0.22px currentColor;color:#2c3138;letter-spacing:-0.12px;word-spacing:-0.47px;">site consultation for the following afternoon at 2:30 pm to discuss the</p>
<p class="t" style="left:1145.5px;top:784.59375px;font-size:12.8px;-webkit-text-stroke:0.22px currentColor;color:#2c3138;letter-spacing:-0.21px;word-spacing:-0.37px;">customer's preferences and needs in order to provide a complete</p>
</section>
<div class="g overlays" aria-label="Overlays">
<div style="left:400px;top:806.5px;width:790px;height:40px;box-shadow:0 0 50px 10px rgba(0,0,0,.2);border-radius:10px"></div>
<svg style="left:1546px;top:759px" width="49" height="49" viewBox="1546 759 49 49" fill="none"><circle cx="1570.2" cy="783.8" r="23" fill="#ff612b"/></svg>
<svg style="left:1558px;top:770px" width="24" height="24" viewBox="1558 770 24 24" fill="none"><path d="M1562.1 771.9H1577.9a2 2 0 0 1 2 2V794H1562.1a2 2 0 0 1-2-2V773.9a2 2 0 0 1 2-2Z" fill="#fff"/><path d="M1563.3 787.2C1566.5 790.2 1573.5 790.2 1576.7 787.2" stroke="#fe6029" stroke-width="1.2" stroke-linecap="round"/></svg>
</div>
</div>
</body>
</html>
